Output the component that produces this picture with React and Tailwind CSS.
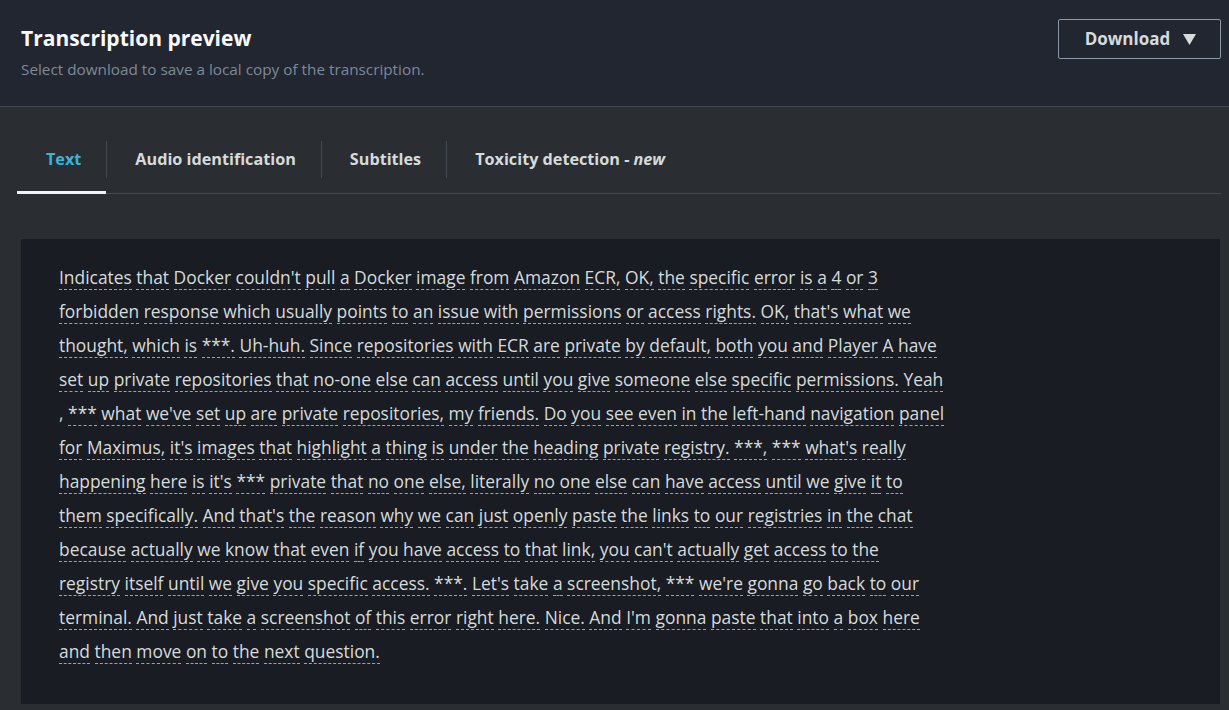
import React from "react";

// wrapped the way the transcript panel shows it
const lines = [
  "Indicates that Docker couldn't pull a Docker image from Amazon ECR, OK, the specific error is a 4 or 3",
  "forbidden response which usually points to an issue with permissions or access rights. OK, that's what we",
  "thought, which is ***. Uh-huh. Since repositories with ECR are private by default, both you and Player A have",
  "set up private repositories that no-one else can access until you give someone else specific permissions. Yeah",
  ", *** what we've set up are private repositories, my friends. Do you see even in the left-hand navigation panel",
  "for Maximus, it's images that highlight a thing is under the heading private registry. ***, *** what's really",
  "happening here is it's *** private that no one else, literally no one else can have access until we give it to",
  "them specifically. And that's the reason why we can just openly paste the links to our registries in the chat",
  "because actually we know that even if you have access to that link, you can't actually get access to the",
  "registry itself until we give you specific access. ***. Let's take a screenshot, *** we're gonna go back to our",
  "terminal. And just take a screenshot of this error right here. Nice. And I'm gonna paste that into a box here",
  "and then move on to the next question.",
];

const tabs = [
  { label: "Text", active: true },
  { label: "Audio identification" },
  { label: "Subtitles" },
  { label: "Toxicity detection", tag: "new" },
];

function Word({ text }) {
  if (/^[,.]$/.test(text)) return <span>{text}</span>;
  return <span className="border-b border-dashed border-[#9aa3ad]">{text}</span>;
}

export default function App() {
  return (
    <div className="min-h-screen bg-[#2a2e33] font-['Open_Sans',sans-serif] text-[#d5dbdb]">
      {/* header */}
      <div className="flex items-start justify-between border-b border-[#434951] bg-[#222630] pl-[21px] pr-[8px] pt-[22px] pb-[26px]">
        <div>
          <h1 className="text-[21px] font-bold leading-[32px] text-[#fafafa]">Transcription preview</h1>
          <p className="mt-[4px] text-[15.3px] leading-[22px] text-[#7d8998]">
            Select download to save a local copy of the transcription.
          </p>
        </div>
        <button className="mt-[-3px] flex h-[40px] w-[163px] items-center justify-center gap-[13px] rounded-[2px] border border-[#8d99a8] pl-[2px] text-[17px] font-bold text-[#d5dbdb]">
          Download
          <svg width="13" height="11" viewBox="0 0 12 10">
            <path d="M0 0h12L6 10z" fill="#d5dbdb" />
          </svg>
        </button>
      </div>

      {/* tabs */}
      <div className="ml-[17px] mr-[8px] mt-[34px] flex h-[53px] border-b border-[#434951]">
        {tabs.map((t, i) => (
          <div
            key={t.label}
            className={
              "relative pl-[29px] pr-[25px] pt-[6px] text-[16.2px] font-bold leading-[24px] " +
              (t.active ? "text-[#39b4dc]" : "text-[#d5dbdb]")
            }
          >
            {i > 0 && <span className="absolute left-0 top-0 h-[37px] w-px bg-[#434951]" />}
            {t.label}
            {t.tag && (
              <span>
                &nbsp;- <i>{t.tag}</i>
              </span>
            )}
            {t.active && <span className="absolute bottom-[-1px] left-0 right-0 h-[3px] bg-[#f2f3f3]" />}
          </div>
        ))}
      </div>

      {/* transcript */}
      <div className="ml-[21px] mr-[9px] mt-[45px] h-[465px] bg-[#191c22] pl-[38px] pt-[21px]">
        <div className="text-[17.4px] leading-[34px]">
          {lines.map((line, li) => (
            <div key={li} className="whitespace-nowrap">
              {line.split(" ").map((w, i) => (
                <React.Fragment key={i}>
                  {i > 0 && " "}
                  <Word text={w} />
                </React.Fragment>
              ))}
            </div>
          ))}
        </div>
      </div>
    </div>
  );
}
